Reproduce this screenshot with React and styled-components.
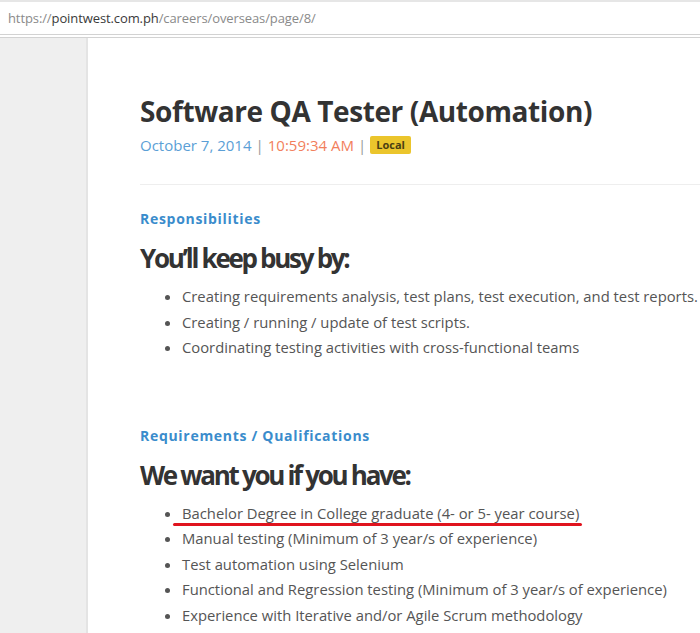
import React from "react";
import styled, { createGlobalStyle } from "styled-components";

const Global = createGlobalStyle`
  html, body { margin: 0; padding: 0; background: #fff; }
  body { font-family: "Open Sans", "Noto Sans", sans-serif; overflow: hidden; }
  * { box-sizing: border-box; }
`;

const Page = styled.div`
  width: 700px;
  height: 633px;
  display: flex;
  flex-direction: column;
  overflow: hidden;
`;

const AddressBar = styled.div`
  height: 38px;
  flex: none;
  background: #fff;
  border-top: 2px solid #e6e6e6;
  border-bottom: 4px double #d2d2d2;
  display: flex;
  align-items: center;
  padding-left: 8px;
  font-size: 13px;
  color: #8a8a8a;
  letter-spacing: -0.1px;
`;

const Host = styled.span`
  color: #3a3a3a;
`;

const Body = styled.div`
  flex: 1;
  display: flex;
  min-height: 0;
`;

const Sidebar = styled.div`
  width: 88px;
  flex: none;
  background: #efefef;
  border-right: 2px solid #e4e4e4;
`;

const Content = styled.main`
  flex: 1;
  padding: 53px 0 0 52px;
  color: #333;
`;

const Title = styled.h1`
  margin: 0;
  font-size: 28px;
  font-weight: 700;
  line-height: 40px;
  color: #333;
  letter-spacing: -0.4px;
`;

const Meta = styled.div`
  display: flex;
  align-items: center;
  gap: 4px;
  font-size: 15px;
  line-height: 22px;
  margin-top: 3px;
`;

const MetaText = styled.span`
  color: ${(p) => p.$color};
`;

const Sep = styled.span`
  color: #999;
`;

const Badge = styled.span`
  background: #ebc52c;
  color: #4a3e12;
  font-size: 11px;
  font-weight: 700;
  padding: 2px 6px;
  border-radius: 2px;
  line-height: 14px;
`;

const Rule = styled.hr`
  border: 0;
  border-top: 1px solid #eeeeee;
  margin: 28px 0 23px;
`;

const SectionLabel = styled.div`
  font-size: 14px;
  font-weight: 700;
  color: #3a8ccc;
  letter-spacing: 0.7px;
  line-height: 22px;
`;

const SectionHeading = styled.h2`
  margin: 11px 0 9px;
  font-size: 26px;
  font-weight: 700;
  line-height: 34px;
  letter-spacing: -2.3px;
  color: #333;
`;

const List = styled.ul`
  margin: 0;
  padding-left: 42px;
  font-size: 14.8px;
  line-height: 25.5px;
  color: #555;
  white-space: nowrap;
`;

const Item = styled.li``;

const Underline = styled.span`
  position: relative;
  &::after {
    content: "";
    position: absolute;
    left: -9px;
    right: -3px;
    bottom: -3px;
    height: 3px;
    border-radius: 2px;
    background: #e0141e;
  }
`;

const Section = styled.section`
  margin-top: ${(p) => p.$gap || 0}px;
`;

const responsibilities = [
  "Creating requirements analysis, test plans, test execution, and test reports.",
  "Creating / running / update of test scripts.",
  "Coordinating testing activities with cross-functional teams",
];

const requirements = [
  "Manual testing (Minimum of 3 year/s of experience)",
  "Test automation using Selenium",
  "Functional and Regression testing (Minimum of 3 year/s of experience)",
  "Experience with Iterative and/or Agile Scrum methodology",
];

export default function App() {
  return (
    <Page>
      <Global />
      <AddressBar>
        https://<Host>pointwest.com.ph</Host>/careers/overseas/page/8/
      </AddressBar>
      <Body>
        <Sidebar />
        <Content>
          <Title>Software QA Tester (Automation)</Title>
          <Meta>
            <MetaText $color="#5b9fd6">October 7, 2014</MetaText>
            <Sep>|</Sep>
            <MetaText $color="#f27f5c">10:59:34 AM</MetaText>
            <Sep>|</Sep>
            <Badge>Local</Badge>
          </Meta>
          <Rule />
          <Section>
            <SectionLabel>Responsibilities</SectionLabel>
            <SectionHeading>You’ll keep busy by:</SectionHeading>
            <List>
              {responsibilities.map((t) => (
                <Item key={t}>{t}</Item>
              ))}
            </List>
          </Section>
          <Section $gap={64}>
            <SectionLabel>Requirements / Qualifications</SectionLabel>
            <SectionHeading>We want you if you have:</SectionHeading>
            <List>
              <Item>
                <Underline>Bachelor Degree in College graduate (4- or 5- year course)</Underline>
              </Item>
              {requirements.map((t) => (
                <Item key={t}>{t}</Item>
              ))}
            </List>
          </Section>
        </Content>
      </Body>
    </Page>
  );
}
